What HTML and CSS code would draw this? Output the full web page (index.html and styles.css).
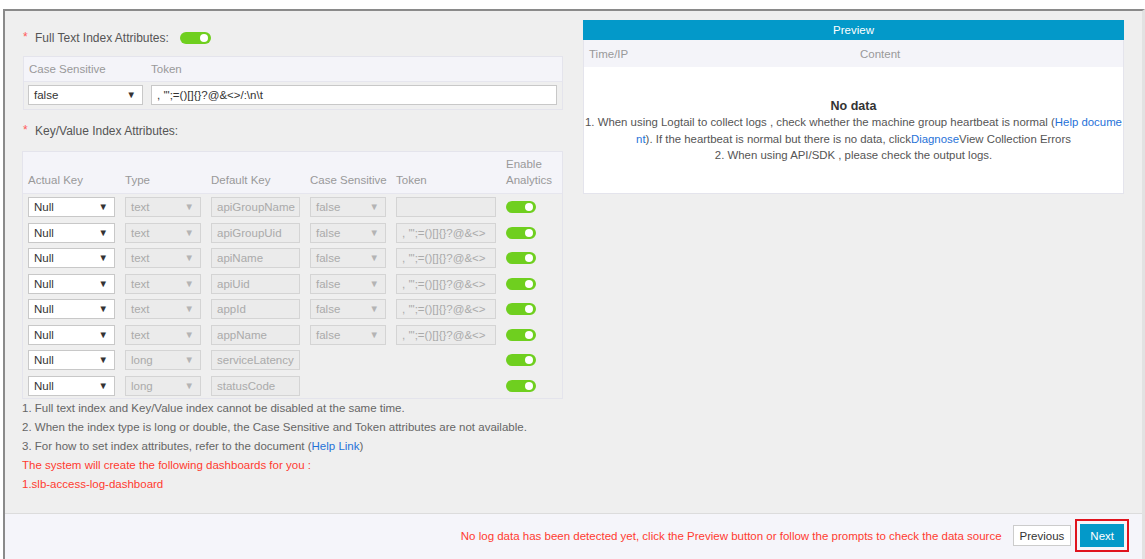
FILE: index.html
```html
<!DOCTYPE html>
<html lang="en">
<head>
<meta charset="utf-8">
<title>Index Attributes</title>
<link rel="stylesheet" href="styles.css">
</head>
<body>
<div class="frame">
  <div class="main">
    <section class="left">
      <div class="field-title">
        <span class="req">*</span>
        <span class="label">Full Text Index Attributes:</span>
        <span class="switch"><span class="knob"></span></span>
      </div>

      <div class="box fulltext">
        <div class="ft-head">
          <span class="ft-c1">Case Sensitive</span>
          <span>Token</span>
        </div>
        <div class="ft-body">
          <div class="select ft-c1-sel"><span>false</span><span class="arrow">&#9660;</span></div>
          <div class="input ft-token">, '";=()[]{}?@&amp;&lt;&gt;/:\n\t</div>
        </div>
      </div>

      <div class="field-title kv-title">
        <span class="req">*</span>
        <span class="label">Key/Value Index Attributes:</span>
      </div>

      <div class="box kv">
        <div class="kv-row kv-head">
          <span>Actual Key</span>
          <span>Type</span>
          <span>Default Key</span>
          <span>Case Sensitive</span>
          <span>Token</span>
          <span>Enable<br>Analytics</span>
        </div>
        <div class="kv-body">
          <div class="kv-row">
            <div class="select"><span>Null</span><span class="arrow">&#9660;</span></div>
            <div class="select disabled"><span>text</span><span class="arrow">&#9660;</span></div>
            <div class="input disabled">apiGroupName</div>
            <div class="select disabled"><span>false</span><span class="arrow">&#9660;</span></div>
            <div class="input disabled"></div>
            <span class="switch"><span class="knob"></span></span>
          </div>
          <div class="kv-row">
            <div class="select"><span>Null</span><span class="arrow">&#9660;</span></div>
            <div class="select disabled"><span>text</span><span class="arrow">&#9660;</span></div>
            <div class="input disabled">apiGroupUid</div>
            <div class="select disabled"><span>false</span><span class="arrow">&#9660;</span></div>
            <div class="input disabled">, '";=()[]{}?@&amp;&lt;&gt;</div>
            <span class="switch"><span class="knob"></span></span>
          </div>
          <div class="kv-row">
            <div class="select"><span>Null</span><span class="arrow">&#9660;</span></div>
            <div class="select disabled"><span>text</span><span class="arrow">&#9660;</span></div>
            <div class="input disabled">apiName</div>
            <div class="select disabled"><span>false</span><span class="arrow">&#9660;</span></div>
            <div class="input disabled">, '";=()[]{}?@&amp;&lt;&gt;</div>
            <span class="switch"><span class="knob"></span></span>
          </div>
          <div class="kv-row">
            <div class="select"><span>Null</span><span class="arrow">&#9660;</span></div>
            <div class="select disabled"><span>text</span><span class="arrow">&#9660;</span></div>
            <div class="input disabled">apiUid</div>
            <div class="select disabled"><span>false</span><span class="arrow">&#9660;</span></div>
            <div class="input disabled">, '";=()[]{}?@&amp;&lt;&gt;</div>
            <span class="switch"><span class="knob"></span></span>
          </div>
          <div class="kv-row">
            <div class="select"><span>Null</span><span class="arrow">&#9660;</span></div>
            <div class="select disabled"><span>text</span><span class="arrow">&#9660;</span></div>
            <div class="input disabled">appId</div>
            <div class="select disabled"><span>false</span><span class="arrow">&#9660;</span></div>
            <div class="input disabled">, '";=()[]{}?@&amp;&lt;&gt;</div>
            <span class="switch"><span class="knob"></span></span>
          </div>
          <div class="kv-row">
            <div class="select"><span>Null</span><span class="arrow">&#9660;</span></div>
            <div class="select disabled"><span>text</span><span class="arrow">&#9660;</span></div>
            <div class="input disabled">appName</div>
            <div class="select disabled"><span>false</span><span class="arrow">&#9660;</span></div>
            <div class="input disabled">, '";=()[]{}?@&amp;&lt;&gt;</div>
            <span class="switch"><span class="knob"></span></span>
          </div>
          <div class="kv-row">
            <div class="select"><span>Null</span><span class="arrow">&#9660;</span></div>
            <div class="select disabled"><span>long</span><span class="arrow">&#9660;</span></div>
            <div class="input disabled">serviceLatency</div>
            <span></span>
            <span></span>
            <span class="switch"><span class="knob"></span></span>
          </div>
          <div class="kv-row">
            <div class="select"><span>Null</span><span class="arrow">&#9660;</span></div>
            <div class="select disabled"><span>long</span><span class="arrow">&#9660;</span></div>
            <div class="input disabled">statusCode</div>
            <span></span>
            <span></span>
            <span class="switch"><span class="knob"></span></span>
          </div>
        </div>
      </div>

      <div class="notes">
        <p>1. Full text index and Key/Value index cannot be disabled at the same time.</p>
        <p>2. When the index type is long or double, the Case Sensitive and Token attributes are not available.</p>
        <p>3. For how to set index attributes, refer to the document (<a class="link">Help Link</a>)</p>
        <p class="warn">The system will create the following dashboards for you :</p>
        <p class="warn">1.slb-access-log-dashboard</p>
      </div>
    </section>

    <section class="right">
      <div class="preview">
        <div class="pv-title">Preview</div>
        <div class="pv-head">
          <span>Time/IP</span>
          <span>Content</span>
        </div>
        <div class="pv-body">
          <div class="nodata">No data</div>
          <div class="pv-line">1. When using Logtail to collect logs , check whether the machine group heartbeat is normal (<a class="link">Help docume<br>nt</a>). If the heartbeat is normal but there is no data, click<a class="link">Diagnose</a>View Collection Errors</div>
          <div class="pv-line">2. When using API/SDK , please check the output logs.</div>
        </div>
      </div>
    </section>
  </div>

  <footer class="footer">
    <span class="foot-msg">No log data has been detected yet, click the Preview button or follow the prompts to check the data source</span>
    <button class="btn">Previous</button>
    <span class="focus-ring"><button class="btn primary">Next</button></span>
  </footer>
</div>
</body>
</html>
```

FILE: styles.css
```css
* { box-sizing: border-box; }

html, body {
  margin: 0;
  padding: 0;
  background: #ffffff;
  font-family: "Liberation Sans", Arial, sans-serif;
  font-size: 11.5px;
  color: #666666;
}

.frame {
  margin: 9px 0 0 3px;
  height: 550px;
  border-top: 2px solid #8a8a8a;
  border-left: 2px solid #8a8a8a;
  border-right: 3px solid #e2e2e2;
  background: #efefef;
  display: flex;
  flex-direction: column;
}

.main {
  flex: 1;
  display: flex;
  gap: 20px;
  padding: 9px 0 0 17px;
}

.left {
  width: 541px;
  display: flex;
  flex-direction: column;
}

.right {
  width: 541px;
}

/* section titles */
.field-title {
  display: flex;
  align-items: center;
  height: 14px;
  margin-top: 11px;
  line-height: 14px;
  color: #555555;
  font-size: 12px;
}

.req {
  color: #ff5a5a;
  width: 13px;
  padding-left: 1px;
  position: relative;
  top: -1px;
}

.kv-title { margin-top: 14px; }

/* toggle switch */
.switch {
  display: inline-block;
  width: 30px;
  height: 12px;
  border-radius: 6px;
  background: #6fcf1f;
  position: relative;
}

.field-title .switch {
  margin-left: 11px;
  width: 31px;
  height: 12px;
}

.knob {
  position: absolute;
  right: 3px;
  top: 2px;
  width: 8px;
  height: 8px;
  border-radius: 50%;
  background: #ffffff;
}

/* boxes */
.box {
  border: 1px solid #e4e4ec;
  background: #efefef;
}

.fulltext {
  margin: 11px 0 0 1px;
  height: 54px;
}

.ft-head {
  height: 25px;
  background: #f4f4f9;
  border-bottom: 1px solid #e6e6ee;
  display: flex;
  align-items: center;
  padding-left: 5px;
  color: #999999;
}

.ft-c1 { width: 122px; }

.ft-body {
  display: flex;
  gap: 8px;
  padding: 3px 5px 0 4px;
}

/* form controls */
.select,
.input {
  height: 20px;
  border: 1px solid #c8c8c8;
  background: #ffffff;
  color: #333333;
  line-height: 18px;
  padding: 0 5px;
  white-space: nowrap;
  overflow: hidden;
}

.select {
  display: flex;
  justify-content: space-between;
  align-items: center;
}

.arrow {
  font-size: 9.5px;
  color: #333333;
  padding-right: 1px;
}

.ft-c1-sel { width: 115px; }
.ft-token { flex: 1; }

.select.disabled,
.input.disabled {
  background: #ebebeb;
  border-color: #d4d4d4;
  color: #aaaaaa;
}

.select.disabled .arrow { color: #b4b4b4; }

/* key/value table */
.kv {
  margin-top: 13px;
}

.kv-row {
  display: grid;
  grid-template-columns: 87px 76px 89px 76px 100px 30px;
  column-gap: 10px;
  align-items: center;
}

.kv-head {
  height: 42px;
  background: #f4f4f9;
  border-bottom: 1px solid #e6e6ee;
  padding: 0 5px 5px 5px;
  align-items: end;
  color: #999999;
  line-height: 16px;
  white-space: nowrap;
}

.kv-body {
  display: flex;
  flex-direction: column;
  gap: 5.5px;
  padding: 3px 5px 2px 5px;
}

.kv-body .kv-row { height: 20px; }

/* notes under the table */
.notes p {
  margin: 0;
  line-height: 19px;
  color: #666666;
}

.notes p.warn { color: #ff3b30; }

.link {
  color: #1f72d8;
  text-decoration: none;
}

/* preview panel */
.preview {
  border: 1px solid #e4e4ec;
  border-top: none;
  background: #ffffff;
}

.pv-title {
  height: 20px;
  line-height: 20px;
  background: #0399c9;
  color: #ffffff;
  text-align: center;
  margin: 0 -1px;
}

.pv-head {
  height: 27px;
  background: #f4f4f9;
  display: grid;
  grid-template-columns: 271px 1fr;
  align-items: center;
  padding-left: 5px;
  color: #999999;
}

.pv-body {
  height: 126px;
  padding-top: 31px;
  text-align: center;
  color: #555555;
}

.nodata {
  font-weight: bold;
  color: #333333;
  font-size: 12.5px;
  line-height: 16px;
}

.pv-line {
  font-size: 11.4px;
  line-height: 16.5px;
  white-space: nowrap;
}

/* footer bar */
.footer {
  height: 46px;
  flex: none;
  border-top: 1px solid #dcdcdc;
  background: #f5f5fa;
  display: flex;
  align-items: center;
  justify-content: flex-end;
  padding: 0 13px 2px 0;
}

.foot-msg {
  color: #ff3b30;
  margin-right: 11px;
}

.btn {
  font-family: inherit;
  font-size: 11.5px;
  height: 21px;
  padding: 0 6px;
  border: 1px solid #cccccc;
  background: #ffffff;
  color: #333333;
  cursor: pointer;
}

.focus-ring {
  margin-left: 4px;
  border: 2px solid #e0141e;
  padding: 3px;
  display: flex;
}

.btn.primary {
  height: 23px;
  background: #0399c9;
  border-color: #0399c9;
  color: #ffffff;
  padding: 0 9px;
}
```
